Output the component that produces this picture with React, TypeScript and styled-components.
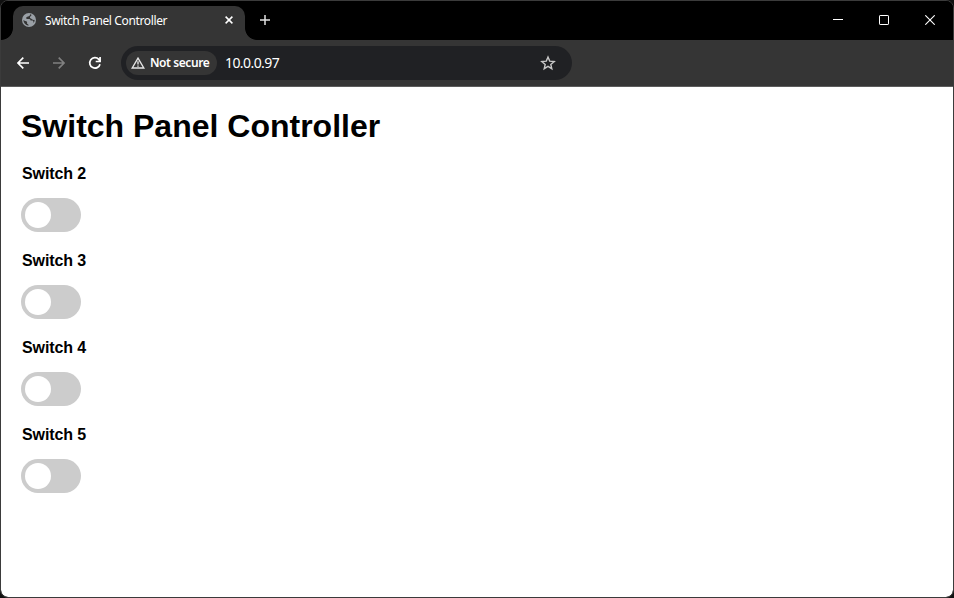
import React, { useState } from 'react';
import styled, { createGlobalStyle } from 'styled-components';

const GlobalStyle = createGlobalStyle`
  *, *::before, *::after { box-sizing: border-box; }
  body { margin: 0; background: #101010; overflow: hidden; }
  button { border: 0; padding: 0; margin: 0; background: none; color: inherit; }
  svg { display: block; }
`;

const Window = styled.div`
  width: 954px;
  height: 598px;
  border: 1px solid #3b3b3b;
  border-radius: 8px;
  background: #000;
  overflow: hidden;
  display: flex;
  flex-direction: column;
`;

const TabStrip = styled.header`
  height: 39px;
  flex: none;
  display: flex;
  align-items: flex-end;
  background: #000;
  color: #fff;
`;

const TabFlare = styled.div<{ $side: 'left' | 'right' }>`
  width: 12px;
  height: 12px;
  background: radial-gradient(circle at ${p => (p.$side === 'left' ? '0 0' : '100% 0')}, #000 11.5px, #353535 12.3px);
`;

const Tab = styled.div`
  width: 232px;
  height: 34px;
  padding: 0 8px 6px 8px;
  border-radius: 10px 10px 0 0;
  background: #353535;
  display: flex;
  align-items: center;
`;

const TabTitle = styled.span`
  width: 122px;
  margin: 0 54px 0 8px;
  padding-top: 1px;
  font: 12px/16px 'Noto Sans', sans-serif;
  letter-spacing: -0.37px;
  white-space: nowrap;
`;

const NewTab = styled.button`
  width: 16px;
  height: 39px;
  padding-bottom: 1px;
  display: flex;
  align-items: center;
  justify-content: center;
`;

const Caption = styled.div`
  margin-left: auto;
  display: flex;
`;

const CaptionButton = styled.button`
  width: 46px;
  height: 39px;
  padding-bottom: 1px;
  display: flex;
  align-items: center;
  justify-content: center;
`;

const Toolbar = styled.nav`
  height: 47px;
  flex: none;
  padding-left: 14px;
  background: #353535;
  border-bottom: 1px solid #5c5c5c;
  display: flex;
  align-items: center;
`;

const NavButton = styled.button<{ $dim?: boolean }>`
  width: 16px;
  height: 16px;
  margin-right: 20px;
  color: ${p => (p.$dim ? '#808080' : '#fff')};
`;

const AddressBar = styled.div`
  width: 451px;
  height: 34px;
  margin-left: -2px;
  padding: 0 16px 0 5px;
  border-radius: 17px;
  background: #202124;
  color: #fff;
  display: flex;
  align-items: center;
`;

const SecurityChip = styled.div`
  width: 91px;
  height: 24px;
  padding-left: 5px;
  border-radius: 12px;
  background: #353535;
  display: flex;
  align-items: center;
  gap: 5px;
  font: 600 12px/24px 'Noto Sans', sans-serif;
  letter-spacing: -0.42px;
  white-space: nowrap;
`;

const Address = styled.span`
  flex: 1;
  margin-left: 8px;
  font: 14px/20px 'Noto Sans', sans-serif;
  letter-spacing: -0.58px;
`;

const Page = styled.main`
  flex: 1;
  padding: 21px 20px 20px;
  background: #fff;
  border-radius: 0 0 7px 7px;
  color: #000;
  font-family: 'Liberation Sans', Arial, sans-serif;
`;

const Heading = styled.h1`
  margin: 0 0 20px;
  font-size: 32px;
  line-height: 37px;
`;

const SwitchGroup = styled.section`
  height: 87px;
`;

const Label = styled.h4`
  margin: 0 0 15px;
  padding-left: 1px;
  font-size: 16px;
  line-height: 18px;
  letter-spacing: -0.12px;
`;

const Toggle = styled.button<{ $on: boolean }>`
  display: block;
  width: 60px;
  height: 34px;
  padding: 4px;
  border-radius: 17px;
  background: ${p => (p.$on ? '#2196f3' : '#ccc')};
  transition: background 0.4s;
`;

const Knob = styled.span<{ $on: boolean }>`
  display: block;
  width: 26px;
  height: 26px;
  border-radius: 50%;
  background: #fff;
  transform: translateX(${p => (p.$on ? 26 : 0)}px);
  transition: transform 0.4s;
`;

const Globe = () => (
  <svg width="16" height="16" viewBox="0 0 16 16">
    <circle cx="8" cy="8" r="7" fill="#9aa0a6" />
    <path d="M9.2 2.3c-.2 1.3-.9 2.2-2.2 2.3-.9.1-1.6.6-1.8 1.4-.1.5.2.9.7.9h1.9c1.2 0 1.8.7 1.8 1.6h1.3c.9 0 1.4.4 1.5 1.1l.1 1.5a5.6 5.6 0 0 0 1.2-3.4c-.7.4-1.7.4-2.4-.2-.5-.4-.7-.9-1.4-1.1-.8-.2-1.1-.8-.9-1.5.2-.6.8-.8 1.2-1.2.3-.3.3-.8 0-1.2ZM2.3 8.1c.2 3 2.2 5.2 5.2 5.6.1-.9-.1-1.5-.9-1.8-.7-.3-.7-.8-.5-1.4.2-.7-.2-1.1-.9-1.2-1.2-.1-2.1-.5-2.9-1.2Z" fill="#353535" />
  </svg>
);

const switches = [2, 3, 4, 5];

export default function App() {
  const [active, setActive] = useState<number[]>([]);
  const flip = (n: number) =>
    setActive(a => (a.includes(n) ? a.filter(x => x !== n) : [...a, n]));

  return (
    <>
      <GlobalStyle />
      <Window>
        <TabStrip>
          <TabFlare $side="left" />
          <Tab>
            <Globe />
            <TabTitle>Switch Panel Controller</TabTitle>
            <svg width="16" height="16" viewBox="0 0 16 16" stroke="#fff" strokeWidth="1.5">
              <path d="m4.6 4.6 6.8 6.8m0-6.8-6.8 6.8" />
            </svg>
          </Tab>
          <TabFlare $side="right" />
          <NewTab aria-label="New tab">
            <svg width="12" height="12" viewBox="0 0 12 12" stroke="#e3e3e3" strokeWidth="1.5">
              <path d="M1 6h10M6 1v10" />
            </svg>
          </NewTab>
          <Caption>
            <CaptionButton aria-label="Minimize">
              <svg width="10" height="10" stroke="#fff"><path d="M0 4.5h10" /></svg>
            </CaptionButton>
            <CaptionButton aria-label="Maximize">
              <svg width="10" height="10" stroke="#fff" fill="none"><rect x=".5" y=".5" width="9" height="9" rx=".6" /></svg>
            </CaptionButton>
            <CaptionButton aria-label="Close">
              <svg width="10" height="10" stroke="#fff" strokeWidth="1.1"><path d="m.3.3 9.4 9.4m0-9.4L.3 9.7" /></svg>
            </CaptionButton>
          </Caption>
        </TabStrip>
        <Toolbar>
          <NavButton aria-label="Back">
            <svg width="16" height="16" fill="none" stroke="currentColor" strokeWidth="1.6"><path d="M14 8H3m5.3-5.4L2.9 8l5.4 5.4" /></svg>
          </NavButton>
          <NavButton $dim aria-label="Forward">
            <svg width="16" height="16" fill="none" stroke="currentColor" strokeWidth="1.6"><path d="M2 8h11M7.7 2.6 13.1 8l-5.4 5.4" /></svg>
          </NavButton>
          <NavButton aria-label="Reload">
            <svg width="16" height="16" fill="none" stroke="currentColor" strokeWidth="1.7"><path d="M13 9.2A5.2 5.2 0 1 1 11.8 4.4L13 5.8M13.1 2v4.5H8.7" /></svg>
          </NavButton>
          <AddressBar>
            <SecurityChip>
              <svg width="14" height="14" viewBox="0 0 14 14" fill="none" stroke="#e3e3e3" strokeWidth="1.4">
                <path d="M7 2.1 12.8 12H1.2Z" />
                <path d="M7 5.2v3.3M7 9.4v1.4" />
              </svg>
              <span>Not secure</span>
            </SecurityChip>
            <Address>10.0.0.97</Address>
            <svg width="16" height="16" viewBox="0 0 16 16" fill="none" stroke="#c7c7c7" strokeWidth="1.4">
              <path d="m8 2.1 1.7 4 4.5.4-3.4 2.9 1 4.3L8 11.4l-3.8 2.3 1-4.3-3.4-2.9 4.5-.4Z" />
            </svg>
          </AddressBar>
        </Toolbar>
        <Page>
          <Heading>Switch Panel Controller</Heading>
          {switches.map(n => (
            <SwitchGroup key={n}>
              <Label>Switch {n}</Label>
              <Toggle $on={active.includes(n)} onClick={() => flip(n)} aria-label={`Switch ${n}`}>
                <Knob $on={active.includes(n)} />
              </Toggle>
            </SwitchGroup>
          ))}
        </Page>
      </Window>
    </>
  );
}
